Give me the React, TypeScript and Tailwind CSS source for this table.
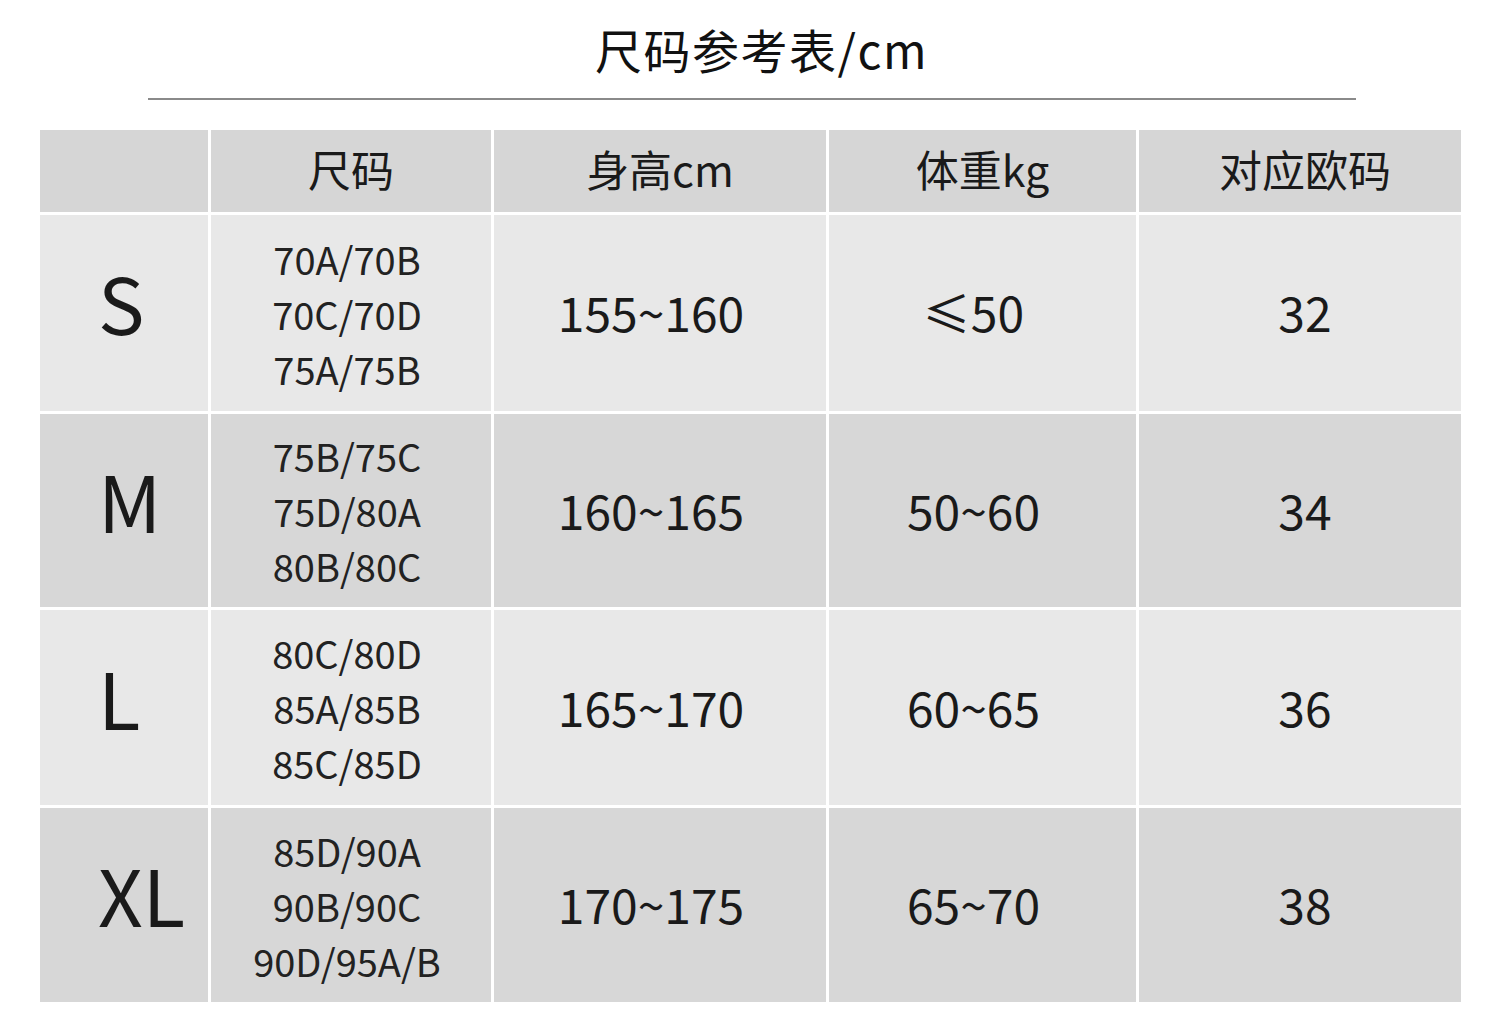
import React from "react";

const rows = [
  { s: "S", cups: ["70A/70B", "70C/70D", "75A/75B"], h: "155~160", w: "≤50", eu: "32", light: true },
  { s: "M", cups: ["75B/75C", "75D/80A", "80B/80C"], h: "160~165", w: "50~60", eu: "34", light: false },
  { s: "L", cups: ["80C/80D", "85A/85B", "85C/85D"], h: "165~170", w: "60~65", eu: "36", light: true },
  { s: "XL", cups: ["85D/90A", "90B/90C", "90D/95A/B"], h: "170~175", w: "65~70", eu: "38", light: false },
];

export default function App() {
  return (
    <div
      className="w-[1499px] h-[1011px] bg-white text-[#1a1a1a] overflow-hidden"
      style={{ fontFamily: '"Noto Sans CJK SC", "Noto Sans", sans-serif' }}
    >
      <div className="h-[98px] flex items-center justify-center pl-[24px] pb-[2px]">
        <div className="text-[47px] leading-none tracking-[1.5px] text-[#111]">尺码参考表/cm</div>
      </div>
      <div className="ml-[148px] w-[1208px] h-[2px] bg-[#8a8a8a]" />
      <div className="mt-[30px] ml-[40px] w-[1421px] grid grid-cols-[168px_280px_332px_307px_322px] grid-rows-[82px_196px_193px_195px_194px] gap-x-[3px] gap-y-[3px]">
        <div className="bg-[#d6d6d6]" />
        <div className="bg-[#d6d6d6] flex items-center justify-center pb-[6px] text-[43px]">尺码</div>
        <div className="bg-[#d6d6d6] flex items-center justify-center pb-[6px] text-[43px]">身高cm</div>
        <div className="bg-[#d6d6d6] flex items-center justify-center pb-[6px] text-[43px]">体重kg</div>
        <div className="bg-[#d6d6d6] flex items-center justify-center pb-[6px] pl-[10px] text-[43px]">对应欧码</div>
        {rows.map((r) => {
          const bg = r.light ? "bg-[#e8e8e8]" : "bg-[#d7d7d7]";
          return (
            <React.Fragment key={r.s}>
              <div className={`${bg} flex items-center pl-[58px] pb-[24px] text-[78px] leading-none`}>{r.s}</div>
              <div className={`${bg} flex flex-col items-center justify-center pr-[8px] text-[38px] leading-[55px] text-[#222]`}>
                {r.cups.map((c) => (
                  <div key={c}>{c}</div>
                ))}
              </div>
              <div className={`${bg} flex items-center justify-center pr-[18px] pb-[4px] text-[48px]`}>{r.h}</div>
              <div className={`${bg} flex items-center justify-center pr-[18px] pb-[4px] text-[48px]`}>{r.w}</div>
              <div className={`${bg} flex items-center justify-center pl-[10px] pb-[4px] text-[48px]`}>{r.eu}</div>
            </React.Fragment>
          );
        })}
      </div>
    </div>
  );
}
